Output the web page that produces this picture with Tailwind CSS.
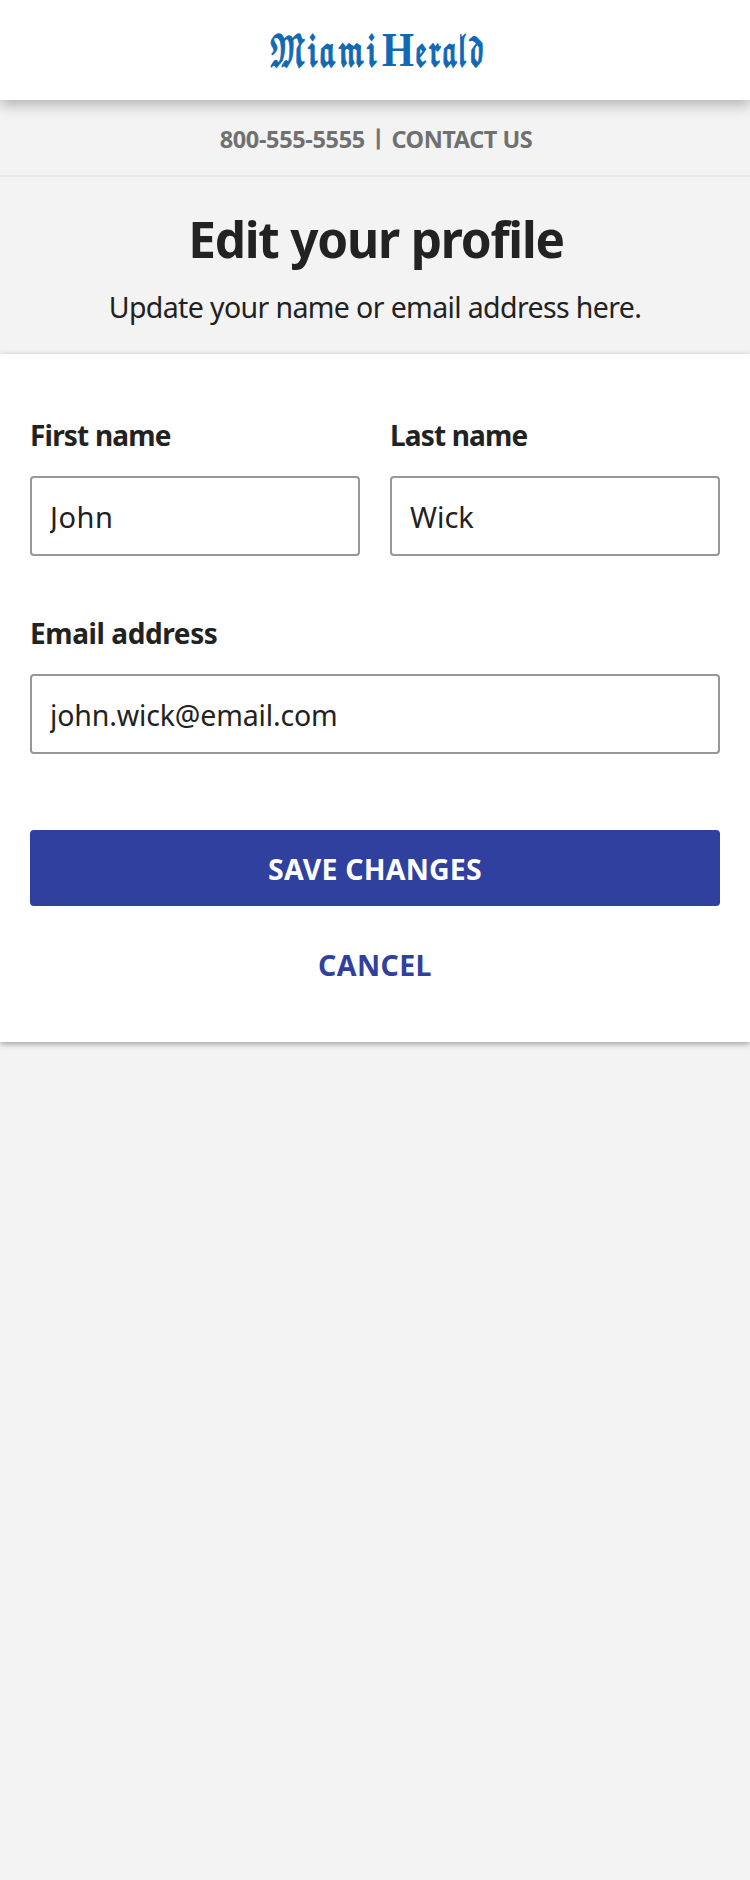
<!DOCTYPE html>
<html lang="en">
<head>
<meta charset="utf-8">
<meta name="viewport" content="width=device-width, initial-scale=1">
<title>Edit your profile</title>
<script src="https://cdn.jsdelivr.net/npm/@tailwindcss/browser@4"></script>
</head>
<body class="min-h-screen bg-[#f3f3f3] font-['Noto_Sans',sans-serif] text-[#222222]">
  <header class="relative z-10 flex h-[100px] items-center justify-center bg-white shadow-[0_4px_14px_rgba(0,0,0,0.3)]">
    <svg class="block h-[60px] w-[240px]" viewBox="0 0 240 60" role="img" aria-label="Miami Herald" fill="#0f69b4" stroke="#0f69b4" stroke-width="1.4" font-family="'DejaVu Math TeX Gyre','Liberation Serif',serif" font-size="41">
      <text x="14" y="46" textLength="109" lengthAdjust="spacingAndGlyphs">𝕸𝖎𝖆𝖒𝖎</text>
      <text x="127" y="46" font-family="'Liberation Serif',serif" font-weight="700" font-size="48" stroke="none" textLength="32" lengthAdjust="spacingAndGlyphs">H</text>
      <text x="160" y="46" textLength="69" lengthAdjust="spacingAndGlyphs">𝖊𝖗𝖆𝖑𝖉</text>
    </svg>
  </header>

  <nav class="flex h-[77px] items-center justify-center border-b-2 border-[#e8e8e8] pt-[4px] pl-[2px] text-[23.5px] font-bold text-[#707070]">
    <a href="#" class="tracking-[-0.35px]">800-555-5555</a>
    <span class="relative top-[-2px] mx-[8px] text-[19px] [-webkit-text-stroke:0.8px_#707070]">|</span>
    <a href="#" class="tracking-[-0.45px]">CONTACT US</a>
  </nav>

  <section class="h-[177px] pt-8 text-center">
    <h1 class="pl-[2px] text-[49.5px] leading-[60px] font-bold tracking-[-1.2px]">Edit your profile</h1>
    <p class="mt-[18px] text-[28.5px] leading-10 tracking-[-0.62px]">Update your name or email address here.</p>
  </section>

  <main class="bg-white px-[30px] pt-[61px] pb-[57px] shadow-[0_2px_6px_rgba(0,0,0,0.35)]">
    <form>
      <div class="grid grid-cols-2 gap-[30px]">
        <div>
          <label for="first" class="block text-[28px] leading-10 font-bold tracking-[-0.8px]">First name</label>
          <input id="first" value="John" class="mt-[21px] block h-20 w-full rounded-[4px] border-2 border-[#979797] bg-white px-[18px] text-[29px] tracking-[0.5px]">
        </div>
        <div>
          <label for="last" class="block text-[28px] leading-10 font-bold tracking-[-0.85px]">Last name</label>
          <input id="last" value="Wick" class="mt-[21px] block h-20 w-full rounded-[4px] border-2 border-[#979797] bg-white px-[18px] text-[29px]">
        </div>
      </div>
      <label for="email" class="mt-[57px] block text-[28px] leading-10 font-bold tracking-[-0.4px]">Email address</label>
      <input id="email" value="john.wick@email.com" class="mt-[21px] block h-20 w-full rounded-[4px] border-2 border-[#979797] bg-white px-[18px] pt-[1px] text-[28.5px] tracking-[-0.15px]">
      <button type="button" class="mt-[76px] block h-[76px] w-full rounded-[4px] bg-[#30409f] pt-[2px] text-[28.5px] font-bold tracking-[0.2px] text-white">SAVE CHANGES</button>
      <a href="#" class="mt-[39px] block text-center text-[28.5px] leading-10 font-bold tracking-[0.4px] text-[#30409f]">CANCEL</a>
    </form>
  </main>
</body>
</html>
